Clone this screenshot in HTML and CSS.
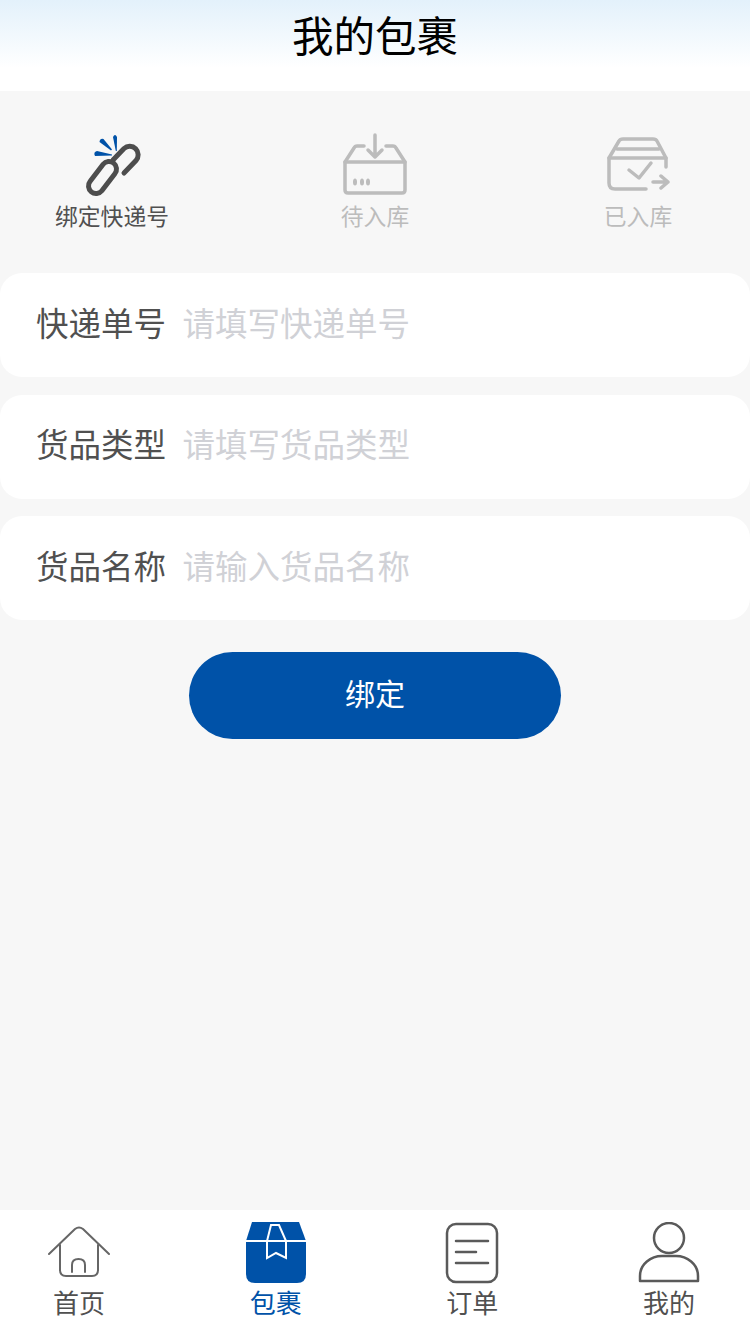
FILE: index.html
```html
<!DOCTYPE html>
<html>
<head>
  <title>我的包裹</title>
  <link rel="stylesheet" href="styles.css">
</head>
<body>

  <header class="top-bar">我的包裹</header>

  <div class="content">
    <div class="steps">
      <div class="step active">
        <svg class="step-icon" viewBox="0 0 64 64">
          <path class="link-line" d="M10.150 48.300 L23.150 31.300 A7.500 7.500 0 0 1 34.850 40.700 L21.850 57.700 A7.500 7.500 0 0 1 10.150 48.300 Z"/>
          <path class="link-line" d="M33 27 L44 15.500 A8.500 8.500 0 0 1 56 27.500 L44 40"/>
          <path class="link-spark" d="M33 4 Q35 0 37 4 L36.800 18 L35.800 18 Z"/>
          <path class="link-spark" d="M19.500 9 Q20 5 23.500 6 L32 16.500 L31 17.500 Z"/>
          <path class="link-spark" d="M15 23 Q13 19 17 18 L32 21.500 L32 22.500 Z"/>
        </svg>
        <span>绑定快递号</span>
      </div>
      <div class="step">
        <svg class="step-icon" viewBox="0 0 64 64">
          <path class="box-line" d="M21 13 H14 Q12 13 11 15 L2 29 V57 Q2 60 5 60 H59 Q62 60 62 57 V29 L53 15 Q52 13 50 13 H43"/>
          <path class="box-line" d="M2 29 H62"/>
          <path class="box-line" d="M32 2 V24 M25 17 L32 24 L39 17"/>
          <ellipse class="box-dot" cx="12" cy="49" rx="2" ry="3.500"/>
          <ellipse class="box-dot" cx="19" cy="49" rx="2" ry="3.500"/>
          <ellipse class="box-dot" cx="25" cy="49" rx="2" ry="3.500"/>
        </svg>
        <span>待入库</span>
      </div>
      <div class="step">
        <svg class="step-icon" viewBox="0 0 64 64">
          <path class="box-line" d="M60 34 V25 L51 8 Q50 6 47 6 H17 Q14 6 13 8 L3 25 V50 Q3 56 9 56 H40"/>
          <path class="box-line" d="M3 25 H60 M11 16 H53"/>
          <path class="box-line" d="M23 37 L33 45 L45 30"/>
          <path class="box-line" d="M47 49 H62 M55 43 L62 49 L55 55"/>
        </svg>
        <span>已入库</span>
      </div>
    </div>

    <div class="form-row">
      <label for="expressNo">快递单号</label>
      <input id="expressNo" type="text" placeholder="请填写快递单号">
    </div>
    <div class="form-row">
      <label for="goodsType">货品类型</label>
      <input id="goodsType" type="text" placeholder="请填写货品类型">
    </div>
    <div class="form-row">
      <label for="goodsName">货品名称</label>
      <input id="goodsName" type="text" placeholder="请输入货品名称">
    </div>

    <button class="bind-btn">绑定</button>
  </div>

  <nav class="tab-bar">
    <a class="tab">
      <svg class="tab-icon" viewBox="0 0 62 62">
        <path class="tab-line thin" d="M1 32 L27 7 Q31 4 35 7 L61 32"/>
        <path class="tab-line thin" d="M12 23 V48 Q12 54 18 54 H44 Q50 54 50 48 V23"/>
        <path class="tab-line thin" d="M24 50 V43 Q24 37 30.500 37 Q37 37 37 43 V50"/>
      </svg>
      <span>首页</span>
    </a>
    <a class="tab tab-active">
      <svg class="tab-icon" viewBox="0 0 62 62">
        <path class="parcel-body" d="M7 0 H54 L61 19 V52 Q61 61 52 61 H10 Q1 61 1 52 V19 Z"/>
        <path class="parcel-line" d="M1 19 H61"/>
        <path class="parcel-line" d="M26 3 H34 L41 19 V36 L31 31 L22 36 V19 Z"/>
      </svg>
      <span>包裹</span>
    </a>
    <a class="tab">
      <svg class="tab-icon" viewBox="0 0 62 62">
        <rect class="tab-line" x="6" y="2" width="50" height="58" rx="9"/>
        <path class="tab-line" d="M15 19 H47 M15 30 H35 M15 41 H47"/>
      </svg>
      <span>订单</span>
    </a>
    <a class="tab">
      <svg class="tab-icon" viewBox="0 0 62 62">
        <circle class="tab-line" cx="31" cy="16" r="15"/>
        <path class="tab-line" d="M2 59 V54 C2 42 13 34 24 34 H38 C49 34 60 42 60 54 V59 Z"/>
      </svg>
      <span>我的</span>
    </a>
  </nav>

</body>
</html>
```
FILE: styles.css
```css
* {
  box-sizing: border-box;
}

body {
  margin: 0;
  height: 1326px;
  display: flex;
  flex-direction: column;
  font-family: "Noto Sans CJK SC", "Liberation Sans", sans-serif;
  background-color: #f7f7f7;
}

.top-bar {
  height: 91px;
  padding-top: 6px;
  text-align: center;
  font-size: 41.500px;
  line-height: 56px;
  color: #000;
  background: linear-gradient(#e3f1fb, #ffffff 75%);
}

.content {
  flex: 1;
  display: flex;
  flex-direction: column;
}

.steps {
  display: flex;
  justify-content: space-between;
  padding: 42px 55px 0;
  height: 182px;
}

.step {
  width: 114px;
  display: flex;
  flex-direction: column;
  align-items: center;
  font-size: 22.800px;
  line-height: 28px;
  color: #bcbcbc;
}

.step.active {
  color: #505050;
}

.step-icon {
  width: 64px;
  height: 64px;
  margin-bottom: 5px;
}

.link-line {
  fill: none;
  stroke: #4d4d4d;
  stroke-width: 5;
  stroke-linecap: round;
}

.link-spark {
  fill: #0052a8;
}

.box-line {
  fill: none;
  stroke: #bcbcbc;
  stroke-width: 3.500;
  stroke-linecap: round;
  stroke-linejoin: round;
}

.box-dot {
  fill: #bcbcbc;
}

.form-row {
  height: 104px;
  margin-bottom: 17.500px;
  padding: 0 0 8px 36px;
  display: flex;
  align-items: center;
  background-color: #fff;
  border-radius: 22px;
}

.form-row label {
  width: 146.500px;
  font-size: 32.500px;
  color: #505050;
}

.form-row input {
  flex: 1;
  min-width: 0;
  border: none;
  outline: none;
  padding: 0;
  background: transparent;
  font-family: inherit;
  font-size: 32.500px;
  color: #505050;
}

.form-row input::placeholder {
  color: #d0d1d6;
}

.bind-btn {
  width: 372px;
  height: 87px;
  margin: 14.500px auto 0;
  padding: 0 0 8px;
  border: none;
  border-radius: 44px;
  background-color: #0052a8;
  color: #fff;
  font-family: inherit;
  font-size: 30px;
}

.tab-bar {
  height: 116px;
  padding: 12px 31px 0 29px;
  display: flex;
  justify-content: space-between;
  background-color: #fff;
}

.tab {
  width: 100px;
  display: flex;
  flex-direction: column;
  align-items: center;
  font-size: 26px;
  line-height: 36px;
  color: #505050;
}

.tab-icon {
  width: 62px;
  height: 62px;
}

.tab-active {
  color: #0052a8;
}

.tab-line {
  fill: none;
  stroke: #5a5a5a;
  stroke-width: 2.500;
  stroke-linecap: round;
  stroke-linejoin: round;
}

.tab-line.thin {
  stroke: #666;
  stroke-width: 2;
}

.parcel-body {
  fill: #0052a8;
}

.parcel-line {
  fill: none;
  stroke: #fff;
  stroke-width: 2;
}
```
